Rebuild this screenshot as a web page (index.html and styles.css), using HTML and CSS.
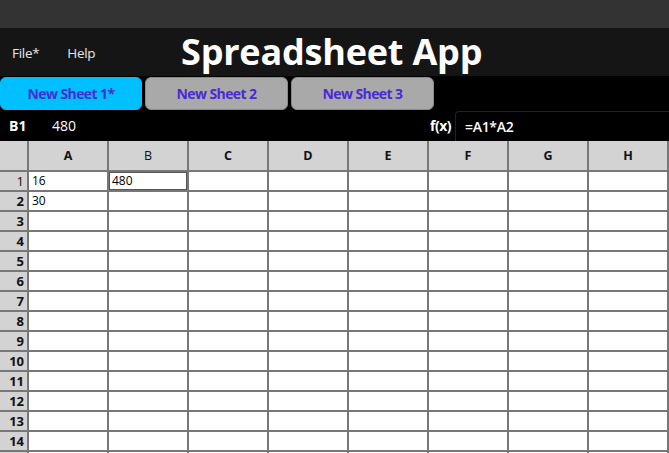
FILE: index.html
```html
<!DOCTYPE html>
<html>
<head>
<meta charset="utf-8">
<link rel="stylesheet" href="styles.css">
</head>
<body>
<div class="topbar"></div>
<header class="header">
  <nav class="menu">
    <span class="menu-item">File*</span>
    <span class="menu-item">Help</span>
  </nav>
  <h1 class="title">Spreadsheet App</h1>
</header>
<div class="tabs">
  <div class="tab active">New Sheet 1*</div>
  <div class="tab">New Sheet 2</div>
  <div class="tab">New Sheet 3</div>
</div>
<div class="formula-bar">
  <span class="cell-ref">B1</span>
  <span class="cell-value">480</span>
  <span class="fx">f(x)</span>
  <div class="formula-input">=A1*A2</div>
</div>
<div class="grid" id="grid"></div>
<script>
  const grid = document.getElementById('grid');
  const cols = ['A','B','C','D','E','F','G','H'];
  const data = {A1:'16', B1:'480', A2:'30'};
  const add = (cls, txt) => { const d = document.createElement('div'); d.className = cls; d.textContent = txt || ''; grid.appendChild(d); };
  add('corner');
  cols.forEach(c => add('col-head' + (c === 'B' ? ' sel' : ''), c));
  for (let r = 1; r <= 15; r++) {
    add('row-head' + (r === 1 ? ' sel' : ''), r <= 14 ? String(r) : '');
    cols.forEach(c => add('cell' + (c + r === 'B1' ? ' selected' : ''), data[c + r]));
  }
</script>
</body>
</html>
```
FILE: styles.css
```css
* { box-sizing: border-box; }
html, body { margin: 0; padding: 0; background: #000; overflow: hidden; }
body { font-family: "Open Sans", "Noto Sans", sans-serif; width: 669px; height: 453px; }

.topbar { height: 28px; background: #333333; }

.header {
  height: 48px;
  background: #151515;
  display: flex;
  align-items: center;
  position: relative;
}
.menu { display: flex; padding-left: 12px; padding-top: 2px; }
.menu-item { color: #e8e8e8; font-size: 13.5px; margin-right: 28px; letter-spacing: -0.3px; }
.title {
  position: absolute;
  left: 181px;
  top: 1px;
  margin: 0;
  color: #fff;
  font-size: 36px;
  font-weight: 700;
  letter-spacing: -0.2px;
  line-height: 46px;
}

.tabs {
  height: 34px;
  padding-top: 1px;
  display: flex;
  gap: 3px;
  background: #000;
}
.tab {
  width: 143px;
  height: 33px;
  border-radius: 6px;
  background: #a9a9a9;
  border: 1px solid #8a8a8a;
  color: #4a2ad8;
  font-size: 14px;
  font-weight: 700;
  letter-spacing: -0.6px;
  display: flex;
  align-items: center;
  justify-content: center;
}
.tab.active { width: 142px; background: #00bfff; border-color: #00bfff; }

.formula-bar {
  height: 31px;
  background: #000;
  display: flex;
  align-items: center;
  color: #fff;
  font-size: 14px;
}
.cell-ref { font-weight: 700; margin-left: 9px; width: 43px; }
.cell-value { flex: 1; }
.fx { font-weight: 700; margin-right: 4px; letter-spacing: -0.5px; }
.formula-input {
  width: 214px;
  height: 30px;
  margin-top: 1px;
  align-self: flex-start;
  border: 1px solid #222;
  border-right: none;
  border-bottom: none;
  border-radius: 4px 0 0 0;
  padding-left: 9px;
  display: flex;
  align-items: center;
  font-weight: 600;
  letter-spacing: -0.3px;
}

.grid {
  display: grid;
  grid-template-columns: 27px repeat(8, 78px);
  grid-template-rows: 29px repeat(15, 18px);
  gap: 2px;
  background: #777;
  width: 669px;
  padding-right: 2px;
  font-size: 12px;
}
.corner, .col-head, .row-head { background: #d3d3d3; color: #111; }
.col-head { display: flex; align-items: center; justify-content: center; font-weight: 700; font-size: 12.5px; }
.row-head { display: flex; align-items: center; justify-content: flex-end; padding-right: 3px; font-weight: 700; font-size: 13px; }
.col-head.sel, .row-head.sel { font-weight: 400; }
.cell { background: #fff; color: #000; padding-left: 3px; display: flex; align-items: center; line-height: 1; }
.cell.selected { box-shadow: inset 0 0 0 1px #555; }
```
